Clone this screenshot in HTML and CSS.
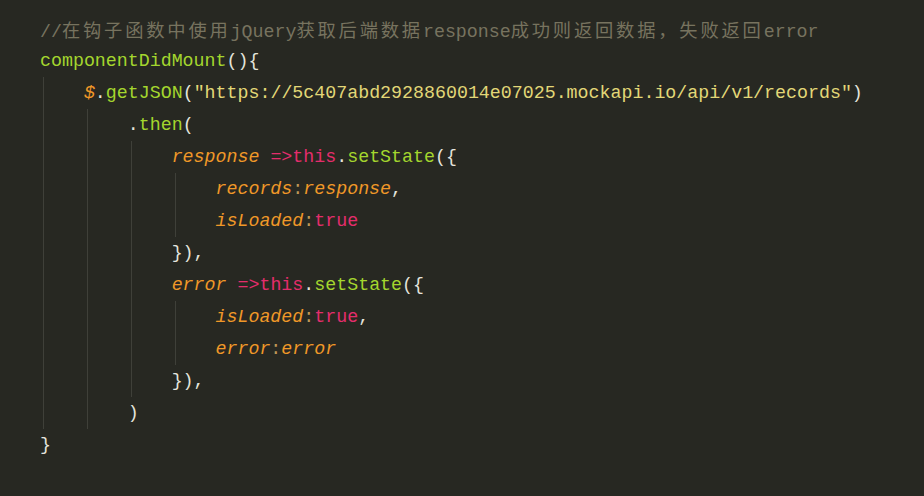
FILE: index.html
```html
<!DOCTYPE html>
<html lang="zh-CN">
<head>
<meta charset="utf-8">
<title>componentDidMount</title>
<link rel="stylesheet" href="styles.css">
</head>
<body>
<div class="editor">
  <div class="line"><span class="c">//<span class="cjk">在钩子函数中使用</span>jQuery<span class="cjk">获取后端数据</span>response<span class="cjk">成功则返回数据，失败返回</span>error</span></div>
  <div class="line"><span class="fn">componentDidMount</span><span class="p">(){</span></div>
  <div class="block">
    <div class="line"><span class="arg">$</span><span class="p">.</span><span class="fn">getJSON</span><span class="p">(</span><span class="s">"https://5c407abd2928860014e07025.mockapi.io/api/v1/records"</span><span class="p">)</span></div>
    <div class="block">
      <div class="line"><span class="p">.</span><span class="fn">then</span><span class="p">(</span></div>
      <div class="block">
        <div class="line"><span class="arg">response</span> <span class="k">=&gt;this</span><span class="p">.</span><span class="fn">setState</span><span class="p">({</span></div>
        <div class="block">
          <div class="line"><span class="arg">records</span><span class="col">:</span><span class="arg">response</span><span class="p">,</span></div>
          <div class="line"><span class="arg">isLoaded</span><span class="col">:</span><span class="k">true</span></div>
        </div>
        <div class="line"><span class="p">}),</span></div>
        <div class="line"><span class="arg">error</span> <span class="k">=&gt;this</span><span class="p">.</span><span class="fn">setState</span><span class="p">({</span></div>
        <div class="block">
          <div class="line"><span class="arg">isLoaded</span><span class="col">:</span><span class="k">true</span><span class="p">,</span></div>
          <div class="line"><span class="arg">error</span><span class="col">:</span><span class="arg">error</span></div>
        </div>
        <div class="line"><span class="p">}),</span></div>
      </div>
      <div class="line"><span class="p">)</span></div>
    </div>
  </div>
  <div class="line"><span class="p">}</span></div>
</div>
</body>
</html>
```

FILE: styles.css
```css
html, body {
  margin: 0;
  padding: 0;
  background: #272822;
}
body {
  width: 924px;
  height: 496px;
  overflow: hidden;
}
.editor {
  padding: 13px 0 0 40px;
  font-family: "Liberation Mono", "Noto Sans CJK SC", monospace;
  font-size: 18.3px;
  line-height: 32px;
  color: #e8e8e0;
}
.line {
  height: 32px;
  white-space: pre;
}
.block {
  margin-left: 3px;
  border-left: 1px solid #3f4039;
  padding-left: calc(4ch - 4px);
}
.c { color: #77735f; }
.cjk {
  font-family: "Noto Sans CJK SC", sans-serif;
  letter-spacing: 2.8px;
}
.fn { color: #a4d62e; }
.p { color: #e4e4dc; }
.s { color: #e2d777; }
.k { color: #e42d6c; }
.arg { color: #f09828; font-style: italic; }
.col { color: #c09858; }
```
